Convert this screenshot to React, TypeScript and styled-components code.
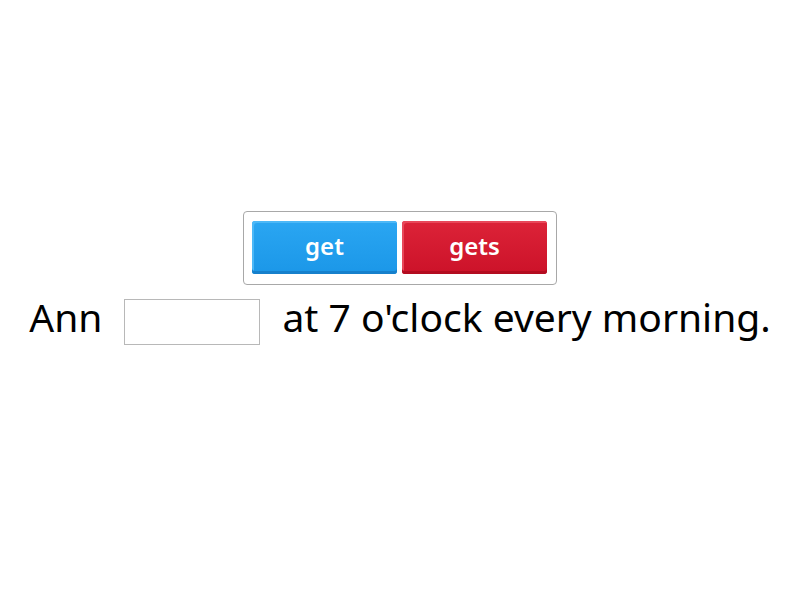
import React from "react";
import styled, { createGlobalStyle } from "styled-components";

const Global = createGlobalStyle`
  html, body { margin: 0; padding: 0; background: #fff; }
  body { font-family: "Noto Sans", sans-serif; }
`;

const Page = styled.div`
  width: 800px;
  height: 600px;
  display: flex;
  flex-direction: column;
  align-items: center;
  padding-top: 211px;
  box-sizing: border-box;
`;

const Tray = styled.div`
  display: flex;
  gap: 5px;
  padding: 9px 9px 9px 8px;
  border: 1px solid #a8a8a8;
  border-radius: 4px;
  width: 314px;
  box-sizing: border-box;
  height: 74px;
`;

const Tile = styled.div<{ $color: "blue" | "red" }>`
  flex: 1;
  height: 53px;
  border-radius: 3px;
  display: flex;
  align-items: center;
  justify-content: center;
  color: #fff;
  font-size: 24px;
  font-weight: 600;
  padding-bottom: 5px;
  box-sizing: border-box;
  background: ${(p) =>
    p.$color === "blue"
      ? "linear-gradient(#2aa6f2, #1b97e8)"
      : "linear-gradient(#dc2338, #cc1229)"};
  box-shadow: inset 0 -3px 0 ${(p) => (p.$color === "blue" ? "#1680cc" : "#b30c20")},
    inset 2px 2px 0 ${(p) => (p.$color === "blue" ? "#4cb8f7" : "#e8485a")};
`;

const Sentence = styled.div`
  display: flex;
  align-items: center;
  margin-top: 5px;
  font-size: 39px;
  color: #000;
  white-space: nowrap;
`;

const Words = styled.span`
  padding-bottom: 10px;
`;

const Blank = styled.span`
  display: inline-block;
  width: 136px;
  height: 46px;
  border: 1px solid #b8b8b8;
  box-sizing: border-box;
  margin: 0 22px;
`;

export default function App() {
  return (
    <>
      <Global />
      <Page>
        <Tray>
          <Tile $color="blue">get</Tile>
          <Tile $color="red">gets</Tile>
        </Tray>
        <Sentence>
          <Words>Ann</Words>
          <Blank />
          <Words>at 7 o'clock every morning.</Words>
        </Sentence>
      </Page>
    </>
  );
}
